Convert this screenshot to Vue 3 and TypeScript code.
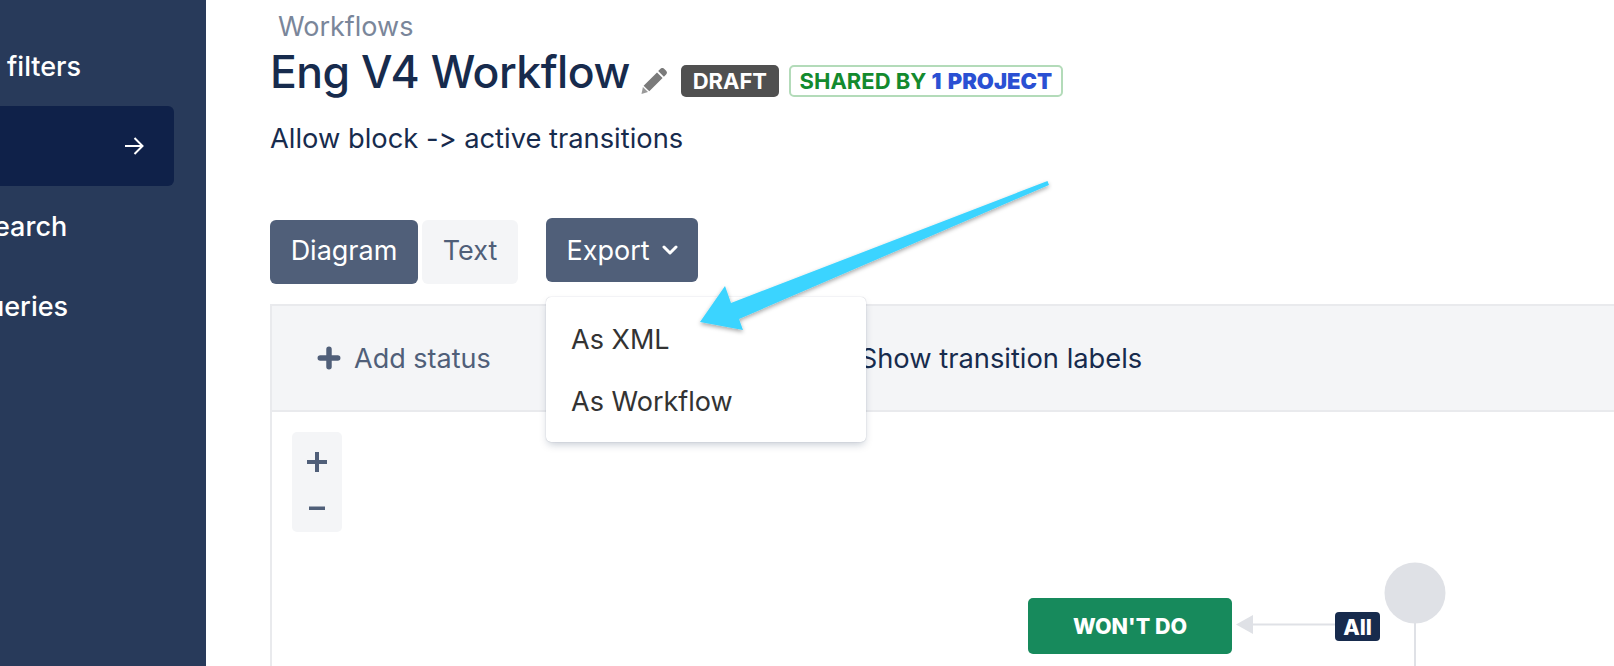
<script setup lang="ts">
const navItems = [
  { label: 'filters', cls: 'nav-filters' },
  { label: '', cls: 'nav-active' },
  { label: 'earch', cls: 'nav-search' },
  { label: 'ueries', cls: 'nav-queries' },
]
</script>

<template>
  <div class="page">
    <aside class="sidebar">
      <div v-for="item in navItems" :key="item.cls" class="nav-item" :class="item.cls">
        <span v-if="item.label">{{ item.label }}</span>
        <svg v-else class="nav-arrow" viewBox="0 0 20 20" fill="none" stroke="#fff" stroke-width="2">
          <path d="M1 10h17M10.5 2l8 8-8 8" />
        </svg>
      </div>
    </aside>

    <main class="main">
      <a class="crumb">Workflows</a>
      <div class="title-row">
        <h1 class="title">Eng V4 Workflow</h1>
        <svg class="pencil" viewBox="0 0 26 26">
          <path fill="#7a7a7a" d="M19.5.8a2.6 2.6 0 0 1 3.6 0l2 2a2.6 2.6 0 0 1 0 3.6l-2.200 2.300-5.700-5.600zM16 4.400l5.600 5.600L8.300 23.300l-5.700-5.600z" />
          <path fill="#9a9a9a" d="M1.900 19 7 24.100.5 26z" />
        </svg>
        <span class="badge-draft">DRAFT</span>
        <span class="badge-shared">SHARED BY <b>1 PROJECT</b></span>
      </div>
      <p class="desc">Allow block -&gt; active transitions</p>

      <div class="toolbar">
        <div class="tabs">
          <button class="btn btn-dark">Diagram</button>
          <button class="btn btn-light">Text</button>
        </div>
        <div class="export">
          <button class="btn btn-dark btn-export">
            Export
            <svg class="chevron" viewBox="0 0 16 10" fill="none" stroke="#fff" stroke-width="3" stroke-linecap="round" stroke-linejoin="round">
              <path d="M2 2l6 6 6-6" />
            </svg>
          </button>
          <div class="menu">
            <div class="menu-item">As XML</div>
            <div class="menu-item">As Workflow</div>
          </div>
        </div>
      </div>

      <section class="panel">
        <header class="panel-head">
          <span class="add-status">
            <svg class="plus" viewBox="0 0 22 22" fill="none" stroke="#505f79" stroke-width="5" stroke-linecap="round">
              <path d="M11 3v16M3 11h16" />
            </svg>
            Add status
          </span>
          <span class="labels-toggle">Show transition labels</span>
        </header>
        <div class="canvas">
          <div class="zoom-box">
            <svg class="zoom-icon" viewBox="0 0 20 20" fill="#505f79"><path d="M8 0h4v8h8v4h-8v8H8v-8H0V8h8z" /></svg>
            <svg class="zoom-icon" viewBox="0 0 20 20" fill="#505f79"><path d="M2 8.500h16v3.500H2z" /></svg>
          </div>
          <div class="status">WON'T DO</div>
          <svg class="edges" viewBox="0 0 230 120" fill="none">
            <path d="M4 72.500 21 63v19z" fill="#dfe1e6" />
            <path d="M20 72.500h90" stroke="#dfe1e6" stroke-width="2" />
            <path d="M183 60v60" stroke="#dfe1e6" stroke-width="2" />
            <circle cx="183" cy="41" r="30.500" fill="#dfe1e6" />
          </svg>
          <span class="edge-label">All</span>
        </div>
      </section>
    </main>

    <svg class="callout" viewBox="0 0 1614 666">
      <defs>
        <filter id="arrow-shadow" x="-10%" y="-10%" width="120%" height="130%">
          <feDropShadow dx="0" dy="2" stdDeviation="2" flood-color="#000" flood-opacity="0.35" />
        </filter>
      </defs>
      <path filter="url(#arrow-shadow)" fill="#3bd4ff" d="M1047.500 181 1049 185 739 319 743 330 700 322 725 286 731 303z" />
    </svg>
  </div>
</template>

<style>
html, body {
  margin: 0;
  background: #fff;
}
</style>

<style scoped>
.page {
  position: relative;
  display: flex;
  width: 1614px;
  height: 666px;
  overflow: hidden;
  font-family: Inter, "Noto Sans", sans-serif;
  font-feature-settings: "calt" 0;
  background: #fff;
}

.sidebar {
  width: 206px;
  flex: none;
  padding-top: 46px;
  box-sizing: border-box;
  background: #283a5a;
  color: #fff;
  font-size: 27px;
  font-weight: 500;
  overflow: hidden;
}

.nav-item {
  display: flex;
  align-items: center;
  height: 40px;
  white-space: nowrap;
}

.nav-filters {
  padding-left: 7px;
}

.nav-active {
  width: 174px;
  height: 80px;
  margin-top: 20px;
  justify-content: flex-end;
  padding-right: 30px;
  box-sizing: border-box;
  background: #0f2149;
  border-radius: 0 6px 6px 0;
}

.nav-arrow {
  width: 20px;
  height: 20px;
}

.nav-search {
  margin-top: 20px;
  margin-left: -6px;
}

.nav-queries {
  margin-top: 40px;
  margin-left: -12px;
}

.main {
  flex: 1;
  min-width: 0;
  display: flex;
  flex-direction: column;
  padding-left: 64px;
  color: #172b4d;
}

.crumb {
  margin: 12px 0 0 8px;
  font-size: 27px;
  line-height: 30px;
  color: #7a869a;
}

.title-row {
  display: flex;
  align-items: center;
  height: 56px;
  margin: 2px 0 0;
}

.title {
  margin: 0;
  font-size: 44.5px;
  font-weight: 500;
  letter-spacing: -0.5px;
  line-height: 56px;
  white-space: nowrap;
}

.pencil {
  width: 26px;
  height: 26px;
  margin: 18px 14px 0 11px;
  flex: none;
}

.badge-draft,
.badge-shared {
  display: flex;
  align-items: center;
  justify-content: center;
  height: 32px;
  box-sizing: border-box;
  margin-top: 18px;
  font-size: 22px;
  font-weight: 700;
  border-radius: 5px;
  white-space: nowrap;
}

.badge-draft {
  width: 98px;
  background: #505050;
  color: #fff;
}

.badge-shared {
  width: 274px;
  margin-left: 10px;
  border: 2px solid #b3dbb9;
  color: #138a2e;
  gap: 5px;
}

.badge-shared b {
  color: #2a50d3;
  word-spacing: 2px;
}

.desc {
  margin: 24px 0 0;
  font-size: 27.3px;
  line-height: 30px;
}

.toolbar {
  display: flex;
  align-items: flex-start;
  margin-top: 64px;
}

.tabs {
  display: flex;
  gap: 4px;
  margin-top: 2px;
}

.tabs .btn {
  padding-bottom: 4px;
}

.btn {
  display: flex;
  align-items: center;
  justify-content: center;
  height: 64px;
  box-sizing: border-box;
  padding: 0;
  border: 0;
  border-radius: 6px;
  font: inherit;
  font-size: 27px;
  cursor: pointer;
}

.btn-dark {
  width: 148px;
  background: #505f79;
  color: #fff;
}

.btn-light {
  width: 96px;
  background: #f4f5f7;
  color: #505f79;
}

.export {
  position: relative;
  margin-left: 28px;
}

.btn-export {
  width: 152px;
  gap: 12px;
}

.chevron {
  width: 16px;
  height: 10px;
}

.menu {
  position: absolute;
  top: 79px;
  left: 0;
  z-index: 2;
  width: 320px;
  height: 145px;
  box-sizing: border-box;
  padding: 11px 0;
  background: #fff;
  border-radius: 5px;
  box-shadow: 0 4px 8px -2px rgba(9, 30, 66, 0.25), 0 0 1px rgba(9, 30, 66, 0.31);
  color: #333;
  font-size: 27px;
}

.menu-item {
  display: flex;
  align-items: center;
  height: 62px;
  padding-left: 25px;
}

.panel {
  flex: 1;
  display: flex;
  flex-direction: column;
  width: 1400px;
  margin-top: 20px;
  border: 2px solid #e9eaed;
  border-right: 0;
  border-bottom: 0;
}

.panel-head {
  display: flex;
  align-items: center;
  height: 104px;
  flex: none;
  padding-left: 45px;
  background: #f4f5f7;
  border-bottom: 2px solid #e9eaed;
  font-size: 27px;
}

.add-status {
  display: flex;
  align-items: center;
  gap: 13px;
  color: #505f79;
}

.plus {
  width: 24px;
  height: 24px;
}

.labels-toggle {
  margin-left: 369px;
  font-size: 27.3px;
  white-space: nowrap;
}

.canvas {
  position: relative;
  flex: 1;
}

.zoom-box {
  display: flex;
  flex-direction: column;
  align-items: center;
  justify-content: center;
  gap: 26px;
  width: 50px;
  height: 100px;
  box-sizing: border-box;
  padding-top: 6px;
  margin: 20px 0 0 20px;
  background: #f4f5f7;
  border-radius: 5px;
}

.zoom-icon {
  width: 20px;
  height: 20px;
}

.status {
  position: absolute;
  left: 756px;
  top: 186px;
  display: flex;
  align-items: center;
  justify-content: center;
  width: 204px;
  height: 56px;
  background: #178a5c;
  border-radius: 5px;
  color: #fff;
  font-size: 21.5px;
  font-weight: 800;
}

.edges {
  position: absolute;
  left: 960px;
  top: 140px;
  width: 230px;
  height: 120px;
}

.edge-label {
  position: absolute;
  left: 1063px;
  top: 200px;
  display: flex;
  align-items: center;
  justify-content: center;
  width: 45px;
  height: 29px;
  background: #172b4d;
  border-radius: 4px;
  color: #fff;
  font-size: 21.5px;
  font-weight: 800;
}

.callout {
  position: absolute;
  inset: 0;
  width: 1614px;
  height: 666px;
  z-index: 3;
  pointer-events: none;
}
</style>
